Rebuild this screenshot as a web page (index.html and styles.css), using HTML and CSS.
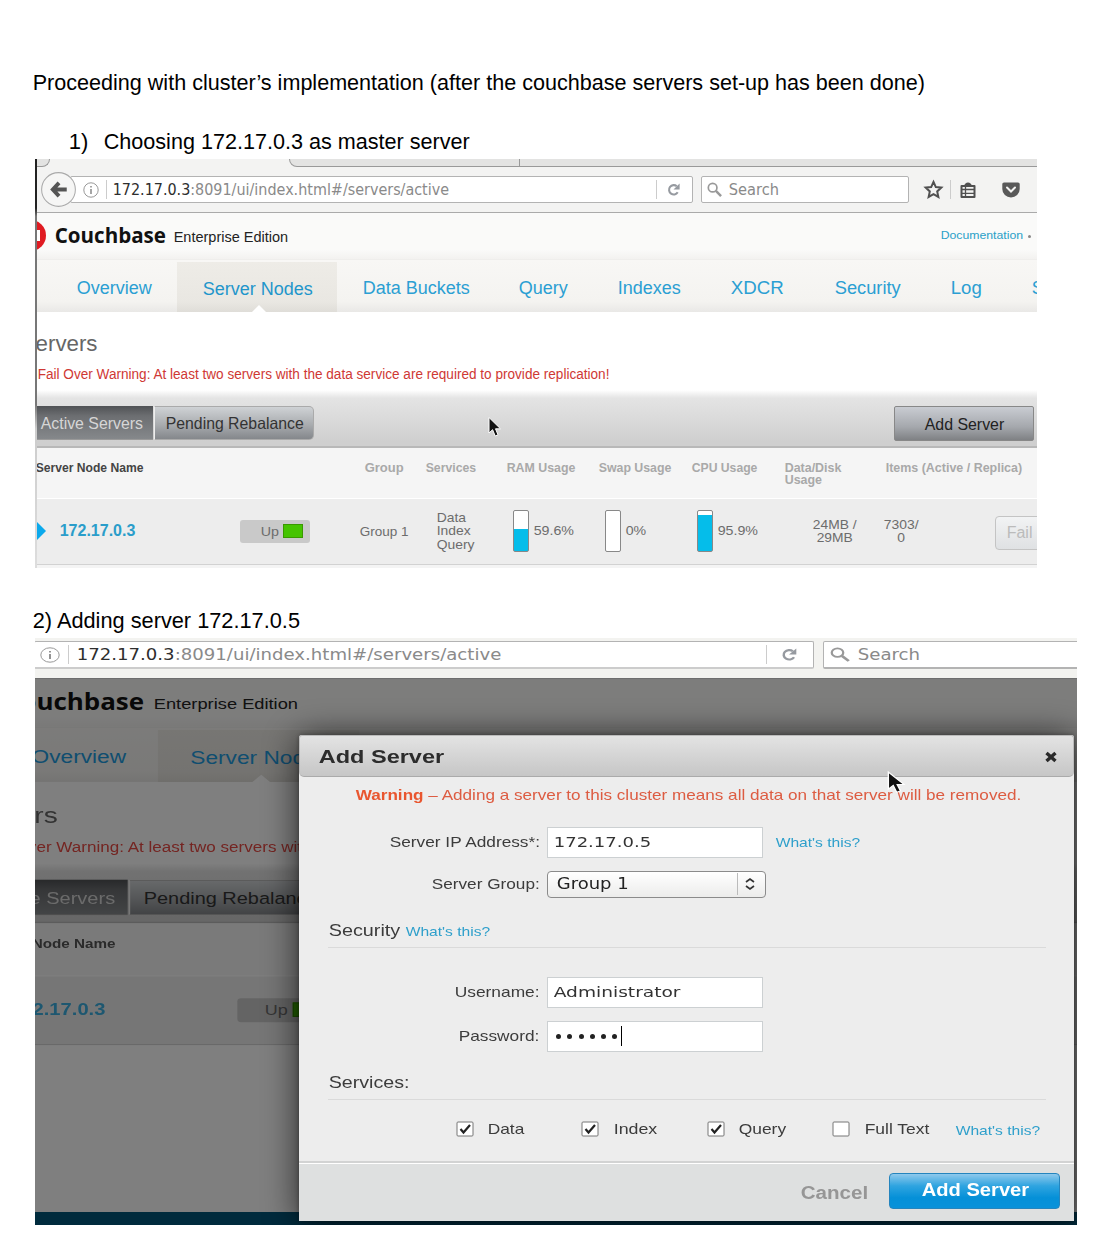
FILE: index.html
```html
<!DOCTYPE html>
<html lang="en">
<head>
<meta charset="utf-8">
<title>Cluster implementation</title>
<link rel="stylesheet" href="styles.css">
</head>
<body>
<main class="doc">
  <p class="line line-intro"><span data-w="892">Proceeding with cluster’s implementation (after the couchbase servers set-up has been done)</span></p>
  <p class="line line-step1"><span data-w="20">1)</span><span data-w="366">Choosing 172.17.0.3 as master server</span></p>

  <section class="shot shot-one">
    <div class="tabs"><i class="tab-left"></i><i class="tab-active"></i><i class="tab-right"></i><i class="tab-rest"></i></div>
    <div class="toolbar">
      <div class="back"><svg viewBox="0 0 34 34"><circle cx="17" cy="17" r="16.4" fill="#f6f6f5" stroke="#aaa"/><path d="M17.500 10.500L11.500 17L17.500 23.500M12 17H25" fill="none" stroke="#555" stroke-width="3.800"/></svg></div>
      <div class="url">
        <svg class="info" viewBox="0 0 16 16"><circle cx="8" cy="8" r="7.200" fill="none" stroke="#999"/><path d="M8 7V12M8 4V5.600" stroke="#888" stroke-width="1.500"/></svg>
        <i class="vsep"></i>
        <span class="address" data-w="336"><b>172.17.0.3</b>:8091/ui/index.html#/servers/active</span>
        <i class="vsep reload-sep"></i>
        <svg class="reload" viewBox="0 0 16 16"><path d="M11.500 4.500A5 5 0 1 0 12.500 11" fill="none" stroke="#969aa0" stroke-width="2.200"/><path d="M14.500 1.500V8H8Z" fill="#969aa0"/></svg>
      </div>
      <div class="search">
        <svg class="glass" viewBox="0 0 16 16"><circle cx="6" cy="6" r="4.600" fill="none" stroke="#999" stroke-width="1.800"/><path d="M9.500 9.500L15 15" stroke="#999" stroke-width="2.600"/></svg>
        <span data-w="50">Search</span>
      </div>
      <svg class="star" viewBox="0 0 18 18"><path d="M9 1.800L11.200 6.700L16.400 7.200L12.500 10.800L13.600 16L9 13.300L4.400 16L5.500 10.800L1.600 7.200L6.800 6.700Z" fill="none" stroke="#505050" stroke-width="1.900"/></svg>
      <i class="vsep"></i>
      <svg class="clip" viewBox="0 0 18 18"><path d="M2.500 5H15.500V16H2.500Z" fill="#f3f3f2" stroke="#505050" stroke-width="2" stroke-linejoin="round"/><path d="M5 5Q6 1.500 9 1.500T13 5Z" fill="#505050"/><path d="M3 8.500H15M3 12.300H15M6.500 6V15" stroke="#505050" stroke-width="1.300"/></svg>
      <svg class="pocket" viewBox="0 0 18 16"><path d="M2 .5H16Q17.700 .5 17.700 2V7A8.700 8.500 0 0 1 .3 7V2Q.3 .5 2 .5Z" fill="#595959"/><path d="M5 5.500L9 9.500L13 5.500" fill="none" stroke="#f3f3f2" stroke-width="2" stroke-linecap="round"/></svg>
    </div>

    <div class="page">
      <header class="brand">
        <i class="logo"></i>
        <span class="name" data-w="111">Couchbase</span>
        <span class="edition" data-w="115">Enterprise Edition</span>
        <span class="docs" data-w="82">Documentation</span><i class="dot"></i>
      </header>
      <nav class="nav">
        <span data-w="75">Overview</span><span class="on"><em data-w="110">Server Nodes</em></span><span data-w="107">Data Buckets</span><span data-w="49">Query</span><span data-w="63">Indexes</span><span data-w="53">XDCR</span><span data-w="66">Security</span><span data-w="31">Log</span><span data-w="64">Settings</span>
      </nav>
      <h1 class="title"><span data-w="77">Servers</span></h1>
      <p class="alert"><span data-w="572">Fail Over Warning: At least two servers with the data service are required to provide replication!</span></p>
      <div class="actions">
        <span class="seg seg-dark"><em data-w="102">Active Servers</em></span>
        <span class="seg seg-light"><em data-w="138">Pending Rebalance</em></span>
        <span class="add"><em data-w="80">Add Server</em></span>
      </div>
      <div class="thead">
        <span class="strong" data-w="108">Server Node Name</span><span data-w="39">Group</span><span data-w="50">Services</span><span data-w="69">RAM Usage</span><span data-w="73">Swap Usage</span><span data-w="66">CPU Usage</span><span data-w="57">Data/Disk<br>Usage</span><span data-w="136">Items (Active / Replica)</span>
      </div>
      <div class="trow">
        <i class="arrow"></i>
        <span class="ip" data-w="76">172.17.0.3</span>
        <span class="chip"><em data-w="18">Up</em><i></i></span>
        <span data-w="49">Group 1</span>
        <span class="multi" data-w="38">Data<br>Index<br>Query</span>
        <span class="meter"><i class="tube ram"></i><em data-w="40">59.6%</em></span>
        <span class="meter"><i class="tube"></i><em data-w="21">0%</em></span>
        <span class="meter"><i class="tube cpu"></i><em data-w="40">95.9%</em></span>
        <span class="multi center" data-w="44">24MB /<br>29MB</span>
        <span class="multi center" data-w="35">7303/<br>0</span>
        <span class="fail"><em data-w="26">Fail</em></span>
      </div>
    </div>
    <svg class="cursor cursor-one" viewBox="0 0 14 21"><path d="M1 1V16.500L4.600 13.200L7.200 19.500L10 18.300L7.500 12.300H12.500Z" fill="#111" stroke="#fff"/></svg>
  </section>

  <p class="line line-step2"><span data-w="267">2) Adding server 172.17.0.5</span></p>

  <section class="shot shot-two">
    <div class="toolbar">
      <div class="url">
        <svg class="info" viewBox="0 0 20 16" preserveAspectRatio="none"><ellipse cx="10" cy="8" rx="9.200" ry="7.200" fill="none" stroke="#999"/><path d="M10 7V12M10 4V5.600" stroke="#888" stroke-width="1.800"/></svg>
        <i class="vsep"></i>
        <span class="address" data-w="425"><b>172.17.0.3</b>:8091/ui/index.html#/servers/active</span>
        <i class="vsep reload-sep"></i>
        <svg class="reload" viewBox="0 0 16 16" preserveAspectRatio="none"><path d="M11.500 4.500A5 5 0 1 0 12.500 11" fill="none" stroke="#969aa0" stroke-width="2.200"/><path d="M14.500 1.500V8H8Z" fill="#969aa0"/></svg>
      </div>
      <div class="search">
        <svg class="glass" viewBox="0 0 16 16" preserveAspectRatio="none"><circle cx="6" cy="6" r="4.600" fill="none" stroke="#999" stroke-width="1.800"/><path d="M9.500 9.500L15 15" stroke="#999" stroke-width="2.400"/></svg>
        <span data-w="63">Search</span>
      </div>
    </div>

    <div class="page page-wide">
      <header class="brand">
        <i class="logo"></i>
        <span class="name" data-w="111">Couchbase</span>
        <span class="edition" data-w="115">Enterprise Edition</span>
      </header>
      <nav class="nav">
        <span data-w="75">Overview</span><span class="on"><em data-w="110">Server Nodes</em></span>
      </nav>
      <h1 class="title"><span data-w="77">Servers</span></h1>
      <p class="alert"><span data-w="254">Fail Over Warning: At least two servers wit</span></p>
      <div class="actions">
        <span class="seg seg-dark"><em data-w="102">Active Servers</em></span>
        <span class="seg seg-light"><em data-w="138">Pending Rebalance</em></span>
      </div>
      <div class="thead"><span class="strong" data-w="108">Server Node Name</span></div>
      <div class="trow">
        <i class="arrow"></i>
        <span class="ip" data-w="76">172.17.0.3</span>
        <span class="chip"><em data-w="18">Up</em><i></i></span>
      </div>
    </div>
    <div class="base"></div>
    <div class="shade"></div>

    <div class="modal">
      <div class="modal-head">
        <span data-w="125">Add Server</span>
        <svg viewBox="0 0 14 12"><path d="M2.500 2L11.500 10M11.500 2L2.500 10" stroke="#2a2a2a" stroke-width="3.400"/></svg>
      </div>
      <div class="modal-body">
        <p class="warn"><span data-w="666"><b>Warning</b> – Adding a server to this cluster means all data on that server will be removed.</span></p>
        <div class="field"><label><span data-w="150">Server IP Address*:</span></label><div class="input"><span data-w="97">172.17.0.5</span></div><a class="link" data-w="84">What's this?</a></div>
        <div class="field field-select"><label><span data-w="108">Server Group:</span></label>
          <div class="select"><span data-w="72">Group 1</span><i></i><svg viewBox="0 0 12 14"><path d="M2 5L6 2L10 5M2 9L6 12L10 9" fill="none" stroke="#333" stroke-width="1.700"/></svg></div></div>
        <h2 class="group group-security"><span data-w="72">Security</span><a class="link" data-w="84">What's this?</a></h2>
        <div class="field field-user"><label><span data-w="85">Username:</span></label><div class="input"><span data-w="127">Administrator</span></div></div>
        <div class="field field-pass"><label><span data-w="81">Password:</span></label><div class="input dots"><i></i><i></i><i></i><i></i><i></i><i></i><b></b></div></div>
        <h2 class="group group-services"><span data-w="81">Services:</span></h2>
        <div class="checks">
          <svg viewBox="0 0 18 16"><rect x="1" y="1" width="16" height="14" rx="1" fill="#fff" stroke="#777"/><path d="M4.500 8L7.500 11.500L14 4" fill="none" stroke="#222" stroke-width="2.200"/></svg><span data-w="37">Data</span>
          <svg viewBox="0 0 18 16"><rect x="1" y="1" width="16" height="14" rx="1" fill="#fff" stroke="#777"/><path d="M4.500 8L7.500 11.500L14 4" fill="none" stroke="#222" stroke-width="2.200"/></svg><span data-w="43">Index</span>
          <svg viewBox="0 0 18 16"><rect x="1" y="1" width="16" height="14" rx="1" fill="#fff" stroke="#777"/><path d="M4.500 8L7.500 11.500L14 4" fill="none" stroke="#222" stroke-width="2.200"/></svg><span data-w="48">Query</span>
          <svg viewBox="0 0 18 16"><rect x="1" y="1" width="16" height="14" rx="1" fill="#fff" stroke="#777"/></svg><span data-w="65">Full Text</span>
          <a class="link" data-w="84">What's this?</a>
        </div>
      </div>
      <div class="modal-foot"><span class="cancel" data-w="67">Cancel</span><span class="submit"><em data-w="107">Add Server</em></span></div>
    </div>
    <svg class="cursor cursor-two" viewBox="0 0 14 21" preserveAspectRatio="none"><path d="M1 1V16.500L4.600 13.200L7.200 19.500L10 18.300L7.500 12.300H12.500Z" fill="#111" stroke="#fff"/></svg>
  </section>
</main>
<script src="fit.js"></script>
</body>
</html>
```
FILE: styles.css
```css
* { box-sizing: border-box; }
body { margin: 0; background: #fff; color: #000; font-family: "Liberation Sans", Arial, sans-serif; }
p, h1, h2 { margin: 0; font-weight: normal; }
em, i { font-style: normal; }
svg { display: block; flex: none; overflow: visible; }
[data-w] { display: inline-block; flex: none; white-space: nowrap; transform-origin: 0 50%; }

.doc { width: 1097px; height: 1258px; overflow: hidden; padding-top: 67px; }
.line { display: flex; align-items: center; height: 32px; font-size: 22px; padding-left: 32px; }
.line-step1 { margin-top: 27px; height: 31px; padding-left: 68px; gap: 15px; }
.line-step1 + .shot { margin-top: 2px; }
.line-step2 { margin-top: 37px; height: 31px; }

.shot { position: relative; margin-left: 35px; overflow: hidden; }
.shot-one { width: 1002px; height: 409px; background: #f4f4f4; }
.shot-one::after { content: ""; position: absolute; inset: 0 auto 0 0; width: 1.500px; background: linear-gradient(#222 0 12%, #777 14% 60%, #ccc 66%, #ddd); }
.shot-two { width: 1042px; height: 587px; margin-top: 2px; background: #fff; }

/* browser chrome */
.tabs { display: flex; height: 8px; background: #f3f3f2; }
.tab-left { width: 15px; background: #e3e3e2; border: solid #999; border-width: 0 1px 1px 0; border-radius: 0 0 9px 0; }
.tab-active { width: 239px; }
.tab-right { width: 231px; background: #e3e3e2; border: solid #999; border-width: 0 1px 1px 1px; border-radius: 0 0 0 9px; }
.tab-rest { flex: 1; background: #e3e3e2; border-bottom: 1px solid #999; }
.toolbar { display: flex; align-items: center; background: #f3f3f2; border-bottom: 1px solid #aaa; font-family: "DejaVu Sans", sans-serif; font-size: 15.500px; color: #8a8a8a; }
.shot-one .toolbar { height: 46px; padding-left: 6px; }
.back { width: 35px; z-index: 1; }
.back svg { width: 35px; height: 35px; }
.url, .search { display: flex; align-items: center; background: #fff; border: 1px solid #b3b3b3; border-radius: 2px; height: 27px; flex: none; }
.url { width: 623px; margin-left: -6px; padding-left: 12px; }
.info { width: 16px; height: 16px; }
.vsep { width: 1px; height: 19px; background: #ccc; }
.url .vsep { margin-left: 7px; }
.address { margin-left: 5px; }
.address b { font-weight: normal; color: #2e2e2e; }
.url .reload-sep { margin-left: 208px; }
.reload { width: 15px; height: 15px; margin-left: 9px; }
.search { width: 208px; margin-left: 8px; padding-left: 5px; }
.glass { width: 15px; height: 15px; margin-right: 6px; }
.star { width: 19px; height: 19px; margin: 0 7px 0 15px; }
.clip { width: 18px; height: 18px; margin-left: 8px; }
.pocket { width: 18px; height: 16px; margin-left: 25px; }

.shot-two .toolbar { height: 41px; background: #f3f3f0; align-items: flex-start; padding-top: 3px; border-color: #ddd; font-size: 15px; }
.shot-two .url { width: 780px; height: 28px; margin-left: -1px; padding-left: 5px; border-bottom-width: 2px; border-bottom-color: #ccc; }
.shot-two .info { width: 20px; }
.shot-two .url .vsep { margin-left: 8px; }
.shot-two .address { margin-left: 7px; }
.shot-two .url .reload-sep { margin-left: 265px; }
.shot-two .reload { width: 18px; margin-left: 13px; }
.shot-two .search { width: 270px; height: 28px; margin-left: 9px; padding-left: 6px; border-bottom-width: 2px; }
.shot-two .glass { width: 20px; margin-right: 7px; }

/* console page */
.page { width: 1002px; }
.page-wide { margin-left: -56px; transform: matrix(1.260, 0, 0, 1.040, 0, 0); transform-origin: 0 0; height: 356px; }
.brand { display: flex; align-items: center; height: 46px; background: linear-gradient(#fafaf9 80%, #f3f2f0); }
.logo { width: 31px; height: 31px; margin: -2px 8px 0 -20px; border-radius: 50%; background: linear-gradient(#fff, #fff) 12px 10px / 13px 11px no-repeat, #e01b22; }
.name { font: bold 21.500px "Open Sans", "Noto Sans", sans-serif; color: #111; margin-top: -4px; }
.edition { font-size: 14px; color: #222; margin: 2px 0 0 8px; }
.docs { font-size: 11.500px; color: #2aa0c8; margin-left: 652px; margin-top: -2px; }
.dot { width: 3px; height: 3px; margin-left: 6px; border-radius: 50%; background: #888; }
.nav { display: grid; grid-template-columns: 101px 185px 156px 99px 113px 104px 116px 81px 70px; padding-left: 41px; align-items: center; height: 53px; font-size: 18px; color: #2b9fd3; background: linear-gradient(#f8f7f5, #f4f3f0 80%, #e9e8e6); border-top: 1px solid #efeeec; }
.nav span:not(.on) { margin-top: 5px; }
.on { position: relative; align-self: end; width: 160px; height: 50px; padding: 4px 0 0 25px; display: flex; align-items: center; background: linear-gradient(#eeece7, #e9e7e2 80%, #dfddd8); color: #1f96cb; }
.on::after { content: ""; position: absolute; left: 75px; bottom: 0; border: solid transparent; border-width: 0 7px 7px; border-bottom-color: #fff; }
.title { height: 63px; line-height: 63px; font-size: 22px; color: #666; background: #fff; }
.title span { margin-left: -15px; }
.alert { height: 23px; background: #fff; font-size: 13.800px; line-height: 1; color: #cf3834; padding-left: 2px; margin-top: -8px; padding-top: 1px; }
.actions { display: flex; height: 58px; padding-top: 16px; color: #222; font-size: 16.500px; background: linear-gradient(#fff 0, #e4e4e4 8px, #cfcfcf 52px); border-bottom: 2px solid #b8b8b8; align-items: flex-start; }
.seg, .add { display: flex; align-items: center; height: 34px; }
.seg-dark { width: 118px; padding: 2px 0 0 5px; color: #d6d6d6; background: linear-gradient(#505255, #6c6e71 30%, #85888b); border-bottom: 1px solid #999; }
.seg-light { width: 160px; margin-left: 1px; padding: 0 0 0 10px; background: linear-gradient(#cfd2d5, #a9acaf 55%, #84878b); border: 1px solid #aaa; border-left-color: #eee; border-radius: 0 5px 5px 0; color: #333; }
.add { width: 140px; margin: 0 0 0 580px; height: 35px; padding: 1px 0 0 29px; background: linear-gradient(#c9ccd2, #a5a8ad 60%, #7f8184); border: 1px solid #888; border-radius: 2px; }
.thead { display: grid; grid-template-columns: 329px 61px 81px 92px 93px 93px 101px 140px; padding: 14px 0 0 0; height: 51px; align-items: start; font-size: 12px; line-height: 12px; font-weight: bold; color: #a9a9a9; background: #f5f5f5; border-bottom: 1px solid #fff; }
.thead .strong { color: #444; }
.trow { display: grid; grid-template-columns: 24px 181px 119px 77px 77px 92px 92px 115px 71px 112px 60px; align-items: center; height: 66px; padding-bottom: 1px; font-size: 13.500px; color: #6c6c6c; background: #ededed; border-bottom: 1px solid #d2d2d2; }
.arrow { width: 0; height: 0; margin-left: 1px; border: 10px solid transparent; border-left-color: #0ba9ec; border-right-width: 0; }
.ip { font-size: 16px; font-weight: bold; color: #2a9dca; }
.chip { display: flex; align-items: center; width: 70px; height: 23px; padding-left: 20px; border-radius: 3px; background: #c9c9c9; }
.chip i { width: 20px; height: 14px; margin-left: 5px; background: #45c400; border: 1px solid #399900; }
.multi { line-height: 13.500px; }
.center { text-align: center; }
.meter { display: flex; align-items: center; }
.meter em { margin-top: -2px; }
.tube { width: 16px; height: 42px; margin-right: 4px; border: 1px solid #888; border-radius: 2px; background: #fff; }
.ram { background: linear-gradient(#fff 45%, #05bdea 45%); }
.cpu { background: linear-gradient(#fff 9%, #05bdea 9%); }
.fail { display: flex; align-items: center; width: 80px; height: 34px; margin-top: 3px; padding-left: 10px; font-size: 16px; color: #bbb; border: 1px solid #c4c4c4; border-radius: 4px; background: linear-gradient(#f2f3f4, #dfe1e3); }
.cursor { position: absolute; z-index: 5; }
.cursor-one { left: 453px; top: 257px; width: 14px; height: 22px; }
.cursor-two { left: 852px; top: 133px; width: 19px; height: 23px; }

/* dimmed page and dialog */
.page-wide .nav, .page-wide .on { color: #1f9ce0; }
.page-wide .nav span:not(.on) { margin-top: 4px; }
.page-wide .alert { color: #e84a44; }
.page-wide .ip { color: #3aaee0; }
.page-wide .chip { width: 80px; padding-left: 21px; }
.page-wide .thead .strong { color: #555; }
.base { position: absolute; left: 0; right: 0; bottom: 0; height: 13px; background: #00567a; }
.shade { position: absolute; inset: 40px 0 0; background: rgba(0, 0, 0, .5); }
.modal { position: absolute; left: 264px; top: 97px; width: 775px; height: 486px; background: #ededed; border-radius: 3px 3px 0 0; box-shadow: 0 0 5px rgba(0, 0, 0, .35), 0 3px 36px rgba(0, 0, 0, .7); color: #3c3c3c; font-size: 14.500px; }
.modal-head { display: flex; align-items: center; justify-content: space-between; height: 42px; padding: 1px 15px 0 18px; font-size: 19px; font-weight: bold; color: #2c2c2c; background: linear-gradient(#e3e3e3, #c6c6c6); border: 1px solid #bbb; border-bottom-color: #aaa; border-radius: 3px 3px 5px 5px; }
.modal-head svg { width: 14px; height: 12px; }
.modal-body { height: 384px; }
.warn { display: flex; align-items: center; height: 36px; padding-left: 56px; font-size: 14.500px; color: #dd5c42; }
.warn b { color: #e9562f; }
.field { display: grid; grid-template-columns: 240px 216px auto; column-gap: 8px; align-items: center; height: 31px; margin-top: 14px; }
.field label { display: flex; justify-content: flex-end; margin-top: -1px; }
.link { color: #2d9fcb; font-size: 13px; }
.field .link { margin-left: 4px; }
.input { display: flex; align-items: center; height: 31px; padding: 0 0 1px 5px; font-family: "DejaVu Sans", sans-serif; background: #fff; border: 1px solid #ccd0d2; color: #333; }
.field-select { height: 26px; margin-top: 13px; }
.select { display: flex; align-items: center; width: 219px; height: 27px; padding: 0 0 2px 8px; border: 1px solid #8b8b8b; border-radius: 4px; background: linear-gradient(#fff, #ececeb); font: 15.500px "DejaVu Sans", sans-serif; color: #222; }
.select i { width: 1px; height: 22px; margin-left: 109px; background: #bbb; }
.select svg { width: 12px; height: 14px; margin-left: 6px; }
.group { display: flex; align-items: center; height: 30px; margin: 21px 28px 0 29px; padding-bottom: 5px; font-size: 16.500px; border-bottom: 1px solid #dadada; }
.group .link { margin: 2px 0 0 5px; }
.field-user { margin-top: 29px; }
.field-pass { margin-top: 13px; }
.dots { gap: 6.300px; padding-left: 8px; }
.dots i { width: 5px; height: 5px; border-radius: 50%; background: #222; }
.dots b { width: 1.500px; height: 20px; margin-left: -3px; background: #000; }
.group-services { margin-top: 18px; }
.checks { display: grid; grid-template-columns: 31px 94px 32px 94px 31px 94px 32px 91px auto; align-items: center; height: 58px; padding-left: 157px; }
.checks svg { width: 18px; height: 16px; }
.checks .link { margin-top: 3px; }
.modal-foot { display: flex; align-items: center; height: 60px; justify-content: flex-end; padding-right: 14px; background: #dee0e0; border-top: 2px solid #d2d3d3; box-shadow: inset 0 1px #fff; font-size: 17.500px; font-weight: bold; }
.cancel { color: #969696; margin: 2px 22px 0 0; }
.submit { display: flex; align-items: center; justify-content: center; width: 171px; height: 36px; margin-top: -2px; padding-bottom: 2px; color: #fff; background: linear-gradient(#8fc9ec, #2fa4e0 35%, #0590d8 70%, #0892da); border: 1px solid #2585be; border-radius: 4px; }
```
FILE: fit.js
```js
// Stretch each label horizontally to the width given in data-w.
document.querySelectorAll('[data-w]').forEach(function (el) {
  el.style.width = 'max-content';
  var target = Number(el.dataset.w);
  var natural = el.offsetWidth;
  el.style.width = natural + 'px';
  el.style.marginRight = (parseFloat(getComputedStyle(el).marginRight) + target - natural) + 'px';
  el.style.transform = 'translateX(0.7px) scaleX(' + target / natural + ')';
});
```
